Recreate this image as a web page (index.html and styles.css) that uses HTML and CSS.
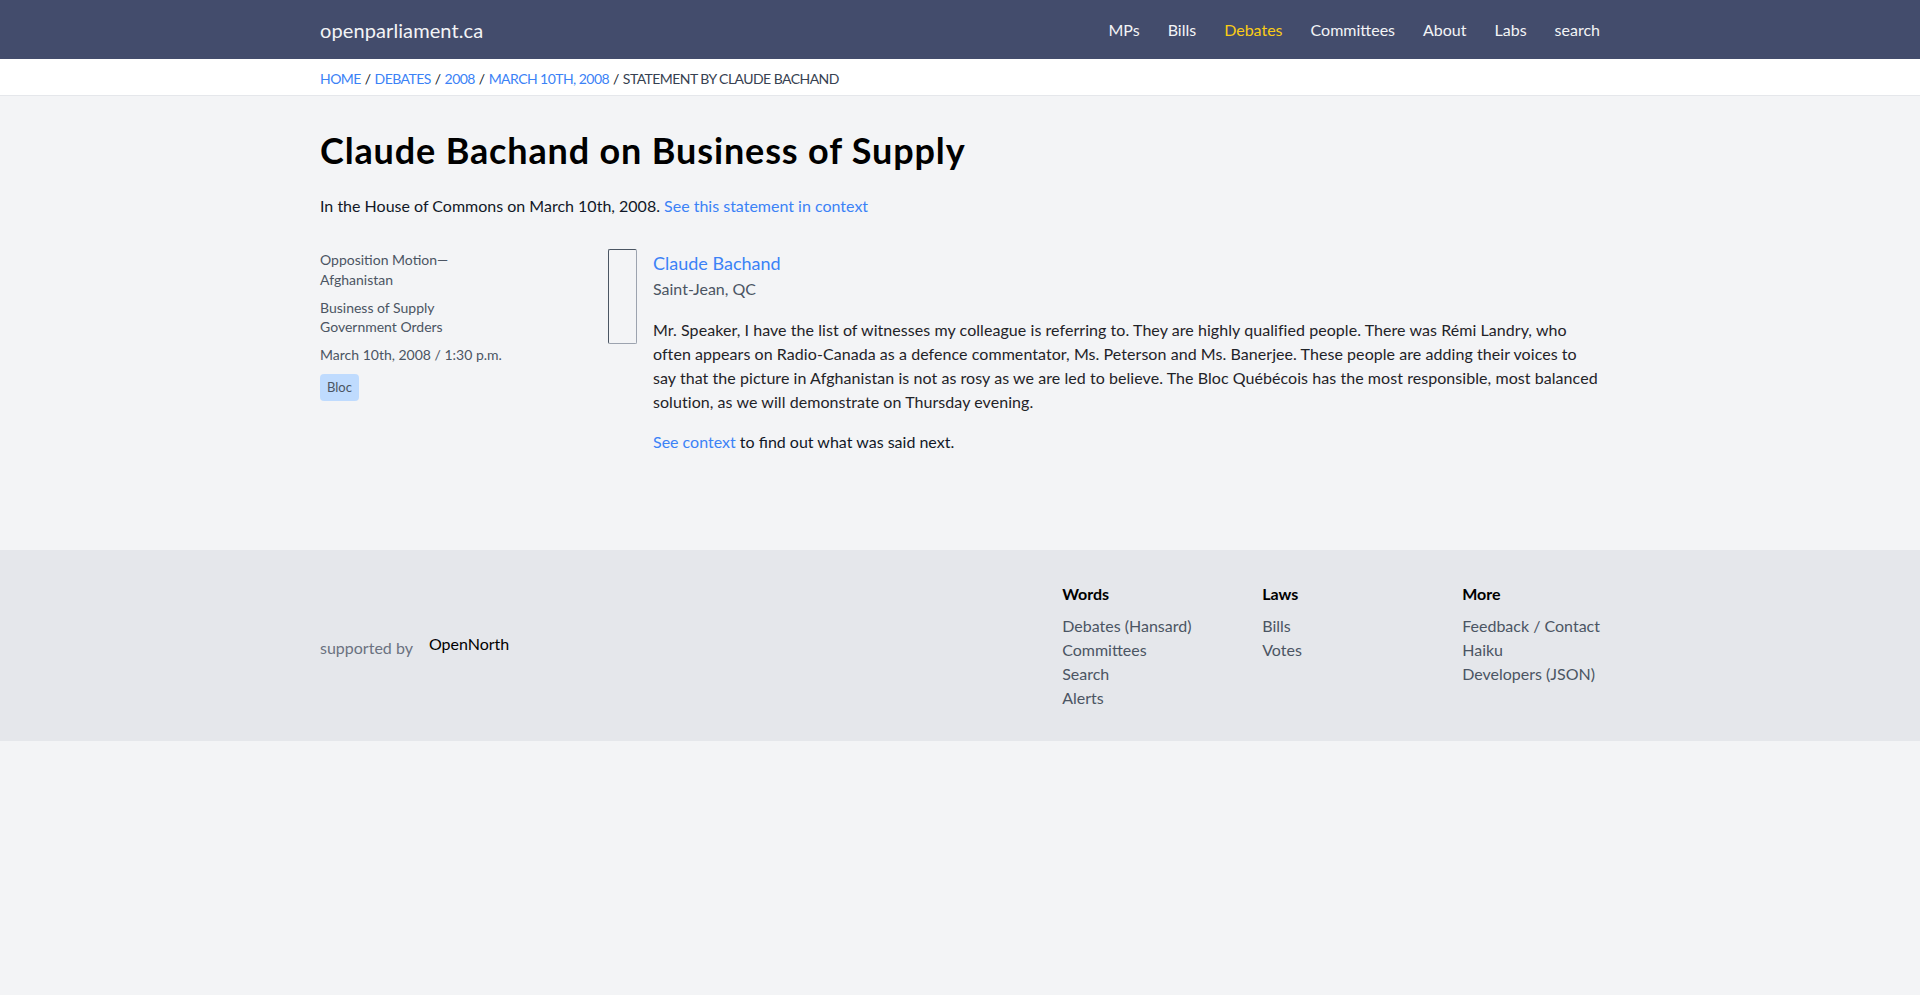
FILE: index.html
```html
<!DOCTYPE html>
<html lang="en">
<head>
<meta charset="utf-8">
<title>Claude Bachand on Business of Supply | openparliament.ca</title>
<link rel="stylesheet" href="styles.css">
</head>
<body>
<header class="topbar">
  <div class="container topbar-inner">
    <a class="logo" href="#">openparliament.ca</a>
    <nav class="mainnav">
      <a href="#">MPs</a>
      <a href="#">Bills</a>
      <a href="#" class="active">Debates</a>
      <a href="#">Committees</a>
      <a href="#">About</a>
      <a href="#">Labs</a>
      <a href="#">search</a>
    </nav>
  </div>
</header>
<div class="crumbs">
  <div class="container crumbs-inner">
    <a href="#">Home</a> / <a href="#">Debates</a> / <a href="#">2008</a> / <a href="#">March 10th, 2008</a> / <span>Statement by Claude Bachand</span>
  </div>
</div>
<main class="container main">
  <h1 class="title">Claude Bachand on Business of Supply</h1>
  <p class="context">In the House of Commons on March 10th, 2008. <a href="#">See this statement in context</a></p>
  <div class="statement">
    <aside class="meta">
      <p class="meta-line">Opposition Motion—Afghanistan</p>
      <p class="meta-line">Business of Supply<br>Government Orders</p>
      <p class="meta-line">March 10th, 2008 / 1:30 p.m.</p>
      <span class="party">Bloc</span>
    </aside>
    <div class="speech">
      <div class="photo"></div>
      <div class="speech-body">
        <a class="speaker" href="#">Claude Bachand</a>
        <div class="riding">Saint-Jean, QC</div>
        <p class="text">Mr. Speaker, I have the list of witnesses my colleague is referring to. They are highly qualified people. There was Rémi Landry, who often appears on Radio-Canada as a defence commentator, Ms. Peterson and Ms. Banerjee. These people are adding their voices to say that the picture in Afghanistan is not as rosy as we are led to believe. The Bloc Québécois has the most responsible, most balanced solution, as we will demonstrate on Thursday evening.</p>
        <p class="next"><a href="#">See context</a> to find out what was said next.</p>
      </div>
    </div>
  </div>
</main>
<footer class="footer">
  <div class="container footer-inner">
    <div class="support">
      <span class="support-label">supported by</span>
      <a class="opennorth" href="#">OpenNorth</a>
    </div>
    <div class="footcols">
      <div class="footcol">
        <h3>Words</h3>
        <a href="#">Debates (Hansard)</a>
        <a href="#">Committees</a>
        <a href="#">Search</a>
        <a href="#">Alerts</a>
      </div>
      <div class="footcol">
        <h3>Laws</h3>
        <a href="#">Bills</a>
        <a href="#">Votes</a>
      </div>
      <div class="footcol last">
        <h3>More</h3>
        <a href="#">Feedback / Contact</a>
        <a href="#">Haiku</a>
        <a href="#">Developers (JSON)</a>
      </div>
    </div>
  </div>
</footer>
</body>
</html>
```
FILE: styles.css
```css
* { box-sizing: border-box; }
html, body {
  margin: 0;
  padding: 0;
  background: #f3f4f6;
  font-family: Lato, "Noto Sans", "Open Sans", sans-serif;
  color: #111827;
  font-size: 16px;
}
a { text-decoration: none; }
.container { width: 1280px; margin: 0 auto; }

.topbar { background: #434c6c; height: 59px; }
.topbar-inner { height: 100%; display: flex; align-items: center; justify-content: space-between; }
.logo { color: #f3f4f6; font-size: 20px; letter-spacing: 0.1px; }
.mainnav { display: flex; gap: 28px; }
.mainnav a { color: #f3f4f6; font-size: 16px; }
.mainnav a.active { color: #facc15; }

.crumbs { background: #fff; border-bottom: 1px solid #e5e7eb; height: 37px; }
.crumbs-inner { height: 100%; display: flex; align-items: center; gap: 4px; font-size: 14px; text-transform: uppercase; color: #111827; letter-spacing: -0.55px; padding-top: 2px; }
.crumbs-inner a { color: #3b82f6; }
.crumbs-inner span { color: #374151; }

.main { padding: 33px 0 96px; }
.title { margin: 0; font-size: 36px; line-height: 43px; font-weight: 700; color: #000; letter-spacing: 0.85px; }
.context { margin: 22px 0 0; line-height: 24px; }
.context a, .next a, .speaker { color: #3b82f6; }

.statement { display: grid; grid-template-columns: 288px 1fr; margin-top: 31px; }
.meta { width: 192px; font-size: 14px; line-height: 19.6px; color: #4b5563; padding-top: 1px; }
.meta-line { margin: 0 0 8.5px; }
.party { display: inline-block; background: #bfdbfe; color: #4b5563; border-radius: 4px; padding: 4px 7px; font-size: 13px; line-height: 19px; margin-top: 1px; }

.speech { display: flex; gap: 16px; }
.photo { flex: none; width: 29px; height: 95px; border: 1px solid #9ca3af; border-top-color: #4b5563; border-left-color: #4b5563; border-radius: 2px; }
.speech-body { flex: 1; }
.speaker { display: block; font-size: 18px; line-height: 28px; }
.riding { color: #4b5563; line-height: 24px; }
.text { margin: 17px 0 0; line-height: 24px; color: #1f2328; letter-spacing: 0.06px; }
.next { margin: 16px 0 0; line-height: 24px; }

.footer { background: #e5e7eb; padding: 32px 0 31px; }
.footer-inner { display: flex; justify-content: space-between; align-items: center; }
.support { display: flex; align-items: center; gap: 16px; padding-top: 2px; }
.support-label { color: #6b7280; }
.opennorth { color: #000; position: relative; top: -4px; }
.footcols { display: flex; }
.footcol { width: 200px; display: flex; flex-direction: column; }
.footcol.last { width: auto; }
.footcol h3 { margin: 0 0 8px; font-size: 16px; line-height: 24px; font-weight: 700; color: #000; }
.footcol a { color: #4b5563; line-height: 24px; }
```
